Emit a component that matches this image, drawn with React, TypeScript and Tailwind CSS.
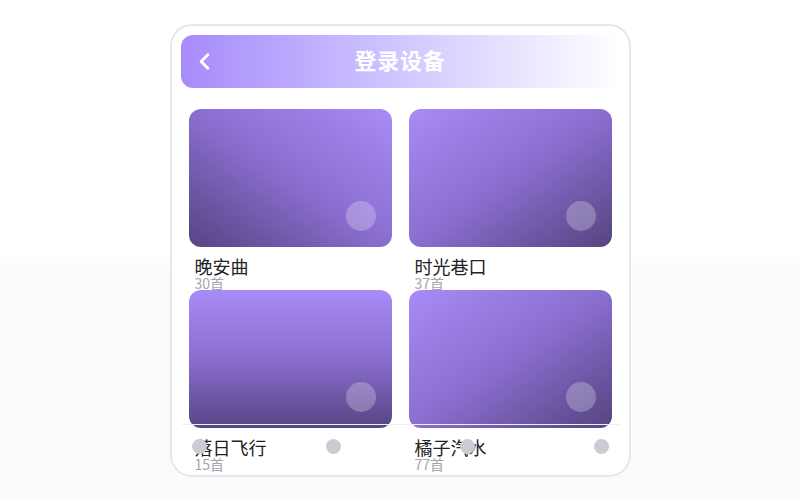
import { ChevronLeft } from "lucide-react";

const devices = [
  { name: "晚安曲", count: 30, bg: "bg-gradient-to-tr from-[#574584] via-[#8a6ecf] to-[#a88bf6]" },
  { name: "时光巷口", count: 37, bg: "bg-gradient-to-br from-[#a88bf6] via-[#8a6ecf] to-[#554581]" },
  { name: "落日飞行", count: 15, bg: "bg-gradient-to-b from-[#a88bf6] via-[#8a6ecf] to-[#574584]" },
  { name: "橘子汽水", count: 77, bg: "bg-gradient-to-br from-[#a88bf6] via-[#8a6ecf] to-[#554581]" },
];

export default function App() {
  return (
    <div
      className="h-[500px] w-full flex items-center justify-center bg-[linear-gradient(to_bottom,#ffffff_50%,#fbfbfc_54%)]"
      style={{ fontFamily: '"Noto Sans CJK SC", "Noto Sans", sans-serif' }}
    >
      {/* Phone frame */}
      <div className="relative w-[461px] h-[453px] rounded-[22px] border-2 border-[#e6e6eb] bg-white overflow-hidden">
        {/* Header */}
        <div className="px-[9px] pt-[9px]">
          <div className="relative h-[53px] rounded-[12px] bg-gradient-to-r from-[#a78bfa] to-white flex items-center justify-center pb-[3px]">
            <ChevronLeft className="absolute left-[10px] top-[13px] text-white" size={27} strokeWidth={2.6} />
            <h1 className="text-[22px] font-bold text-white tracking-[0.8px]">登录设备</h1>
          </div>
        </div>

        {/* Device grid */}
        <div className="grid grid-cols-2 gap-x-[17px] px-[17px] pt-[21px]">
          {devices.map((d) => (
            <div key={d.name} className="h-[181px]">
              <div className={`relative h-[138px] rounded-[12px] ${d.bg}`}>
                <div className="absolute right-4 bottom-4 w-[30px] h-[30px] rounded-full bg-white/25" />
              </div>
              <div className="pl-[6px] pt-[9px]">
                <div className="text-[18px] leading-[20px] text-[#222]">{d.name}</div>
                <div className="text-[14px] leading-[15px] text-[#a3a6ad]">{d.count}首</div>
              </div>
            </div>
          ))}
        </div>

        {/* Bottom nav */}
        <div className="absolute left-[10px] right-[10px] bottom-0 h-[51px] border-t border-[#eeeef2] flex justify-between items-start px-[10px] pt-[14px]">
          <span className="w-[15px] h-[15px] rounded-full bg-[#c9cdd3]" />
          <span className="w-[15px] h-[15px] rounded-full bg-[#c9cdd3]" />
          <span className="w-[15px] h-[15px] rounded-full bg-[#c9cdd3]" />
          <span className="w-[15px] h-[15px] rounded-full bg-[#c9cdd3]" />
        </div>
      </div>
    </div>
  );
}
